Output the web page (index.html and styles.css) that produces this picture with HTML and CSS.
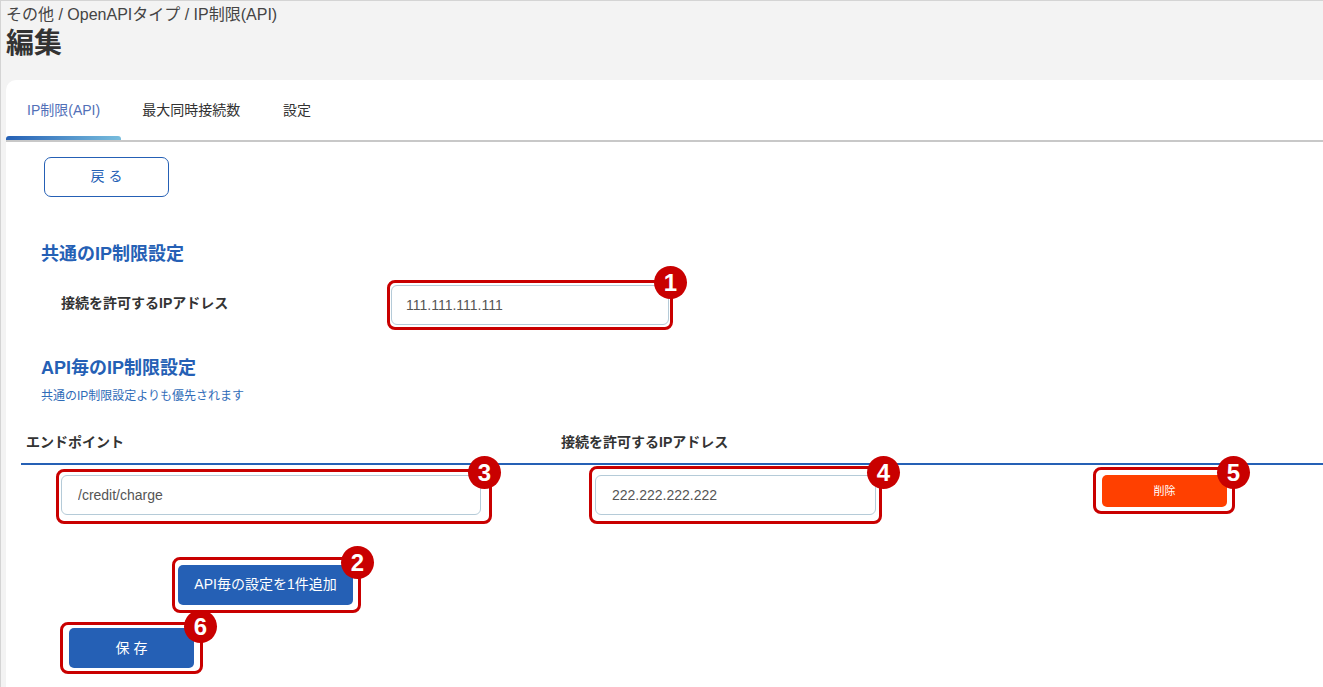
FILE: index.html
```html
<!DOCTYPE html>
<html lang="ja">
<head>
<meta charset="utf-8">
<title>編集</title>
<link rel="stylesheet" href="styles.css">
</head>
<body>
<header class="page-head">
  <div class="crumbs">その他 / OpenAPIタイプ / IP制限(API)</div>
  <h1 class="title">編集</h1>
</header>
<main class="card">
  <nav class="tabs">
    <a class="tab tab-active">IP制限(API)</a>
    <a class="tab">最大同時接続数</a>
    <a class="tab">設定</a>
  </nav>
  <button class="btn-back">戻 る</button>

  <h2 class="sec sec-common">共通のIP制限設定</h2>
  <div class="common-row">
    <label class="field-label">接続を許可するIPアドレス</label>
    <div class="mark">
      <input class="ip-input ip-common" value="111.111.111.111">
      <span class="ring ring-1"></span>
      <span class="badge badge-1">1</span>
    </div>
  </div>

  <h2 class="sec sec-api">API毎のIP制限設定</h2>
  <p class="note">共通のIP制限設定よりも優先されます</p>

  <div class="table-head">
    <div>エンドポイント</div>
    <div>接続を許可するIPアドレス</div>
  </div>
  <div class="table-row">
    <div class="mark">
      <input class="ip-input ip-endpoint" value="/credit/charge">
      <span class="ring ring-3"></span>
      <span class="badge badge-3">3</span>
    </div>
    <div class="mark">
      <input class="ip-input ip-each" value="222.222.222.222">
      <span class="ring ring-4"></span>
      <span class="badge badge-4">4</span>
    </div>
    <div class="mark">
      <button class="btn-delete">削除</button>
      <span class="ring ring-5"></span>
      <span class="badge badge-5">5</span>
    </div>
  </div>

  <div class="add-wrap">
    <div class="mark">
      <button class="btn-primary btn-add">API毎の設定を1件追加</button>
      <span class="ring ring-2"></span>
      <span class="badge badge-2">2</span>
    </div>
  </div>
  <div class="save-wrap">
    <div class="mark">
      <button class="btn-primary btn-save">保 存</button>
      <span class="ring ring-6"></span>
      <span class="badge badge-6">6</span>
    </div>
  </div>
</main>
</body>
</html>
```
FILE: styles.css
```css
* { box-sizing: border-box; }
html, body { height: 100%; }
body {
  margin: 0;
  overflow: hidden;
  background: #f3f3f3;
  border-top: 1px solid #d4d4d4;
  border-left: 1px solid #d4d4d4;
  font-family: "Liberation Sans", "Noto Sans CJK JP", sans-serif;
  color: #333;
}
.page-head { padding: 4px 5px 0 5px; height: 79px; }
.crumbs { font-size: 16px; line-height: 20px; color: #444; }
.title { margin: 1px 0 0; font-size: 28px; line-height: 36px; font-weight: 700; color: #333; }

.card {
  margin-left: 5px;
  background: #fff;
  border-radius: 10px 0 0 0;
  height: 640px;
}
.tabs {
  display: flex;
  height: 62px;
  border-bottom: 2px solid #c8c8c8;
}
.tab {
  position: relative;
  display: block;
  padding: 21px 21.3px 0;
  font-size: 14px;
  line-height: 18px;
  color: #333;
}
.tab-active { width: 115px; padding-left: 21px; padding-right: 0; color: #5270b8; white-space: nowrap; }
.tab-active::after {
  content: "";
  position: absolute;
  left: 0;
  right: 0;
  bottom: 0;
  height: 4px;
  border-radius: 3px 3px 0 0;
  background: linear-gradient(to right, #2560b5, #78bddd);
}
.btn-back {
  display: block;
  margin: 15px 0 0 38px;
  padding: 0 0 4px;
  width: 125px;
  height: 40px;
  background: #fff;
  border: 1px solid #2560b5;
  border-radius: 7px;
  color: #2560b5;
  font: inherit;
  font-size: 14px;
}
.sec { margin: 0; font-weight: 700; line-height: 20px; color: #2560b5; font-size: 18px; }
.sec-common { margin: 47px 0 0 35px; }
.sec-api { margin: 33px 0 0 35px; }
.common-row {
  display: flex;
  margin-top: 21px;
  padding-left: 55px;
}
.field-label {
  width: 330px;
  font-size: 14px;
  line-height: 36px;
  font-weight: 700;
  color: #333;
}
.note {
  margin: 8px 0 0 35px;
  font-size: 12px;
  line-height: 20px;
  color: #2f6cb8;
}
.table-head {
  display: grid;
  grid-template-columns: 535px 1fr;
  margin: 26px 0 0 15px;
  padding: 0 0 11px 5px;
  border-bottom: 2px solid #2560b5;
  font-size: 14px;
  line-height: 20px;
  font-weight: 700;
  color: #333;
}
.table-row {
  display: flex;
  align-items: flex-start;
  margin-left: 55px;
  padding-top: 10px;
}
.mark { position: relative; flex: none; display: block; }
.ip-input {
  display: block;
  height: 40px;
  padding: 0 14px;
  background: #fff;
  border: 1px solid #b5cbd8;
  border-radius: 6px;
  font: inherit;
  font-size: 14px;
  color: #555;
}
.ip-endpoint, .ip-each { padding: 0 16px; }
.ip-common { width: 278px; }
.ip-endpoint { width: 420px; }
.ip-each { width: 281px; margin-left: 114px; }
.btn-delete {
  display: block;
  margin-left: 226px;
  padding: 0 0 2px;
  width: 125px;
  height: 32px;
  border: 0;
  border-radius: 5px;
  background: #ff4000;
  color: #fff;
  font: inherit;
  font-size: 11px;
}
.btn-primary {
  display: block;
  height: 40px;
  padding: 0 0 4px;
  border: 0;
  border-radius: 5px;
  background: #2560b5;
  color: #fff;
  font: inherit;
  font-size: 14px;
}
.add-wrap { margin: 50px 0 0 172px; display: flex; }
.btn-add { width: 175px; }
.save-wrap { margin: 23px 0 0 63px; display: flex; }
.btn-save { width: 125px; padding-bottom: 3px; }

.ring {
  position: absolute;
  border: 3px solid #c90000;
  border-radius: 8px;
  pointer-events: none;
}
.ring-1 { left: -4px; right: -4px; top: -5px; bottom: -5px; }
.ring-3 { left: -5px; right: -11px; top: -6px; bottom: -9px; }
.ring-4 { left: 108px; right: -6px; top: -9px; bottom: -9px; }
.ring-5 { left: 217px; right: -8px; top: -8px; bottom: -7px; }
.ring-2 { left: -6px; right: -8px; top: -8px; bottom: -8px; }
.ring-6 { left: -9px; right: -9px; top: -6px; bottom: -6px; }

.badge {
  position: absolute;
  width: 33px;
  height: 33px;
  border-radius: 50%;
  background: #c90000;
  color: #fff;
  font-size: 24px;
  line-height: 33px;
  font-weight: 700;
  text-align: center;
}
.badge-1 { right: -18px; top: -19px; }
.badge-3 { right: -20px; top: -19px; }
.badge-4 { right: -24px; top: -19px; }
.badge-5 { right: -23px; top: -19px; }
.badge-2 { right: -21px; top: -19px; }
.badge-6 { right: -23px; top: -18px; }
```
